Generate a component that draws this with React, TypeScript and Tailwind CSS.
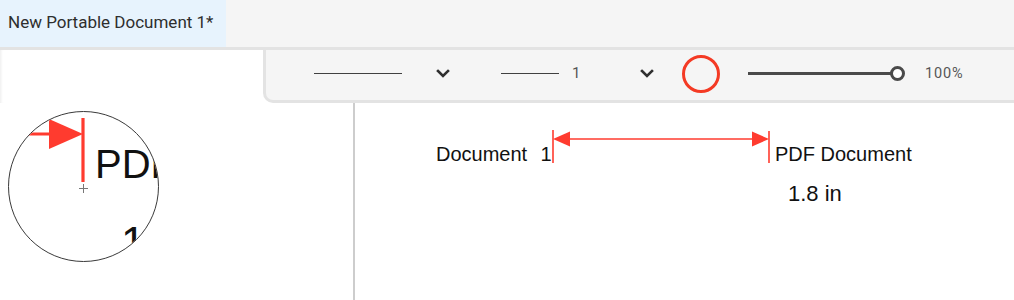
import { ReactNode } from "react";

const RED = "#ff3b2f";

// drawing on the page: distance measurement between two text blocks
function PageDrawing({ scale = 1 }: { scale?: number }) {
  return (
    <svg
      width={659 * scale}
      height={197 * scale}
      viewBox="0 0 659 197"
      className="block"
      style={{ fontFamily: '"Liberation Sans", Arial, sans-serif' }}
    >
      <text x="81" y="58" fontSize="20" fill="#111">
        Document
      </text>
      <text x="185.5" y="58" fontSize="20" fill="#111">
        1
      </text>
      <text x="420" y="58" fontSize="20" fill="#111">
        PDF Document
      </text>
      <text x="433" y="98" fontSize="22" fill="#111">
        1.8 in
      </text>

      {/* extension ticks */}
      <line x1="198" y1="27" x2="198" y2="60" stroke={RED} strokeWidth="1.6" />
      <line x1="414" y1="28" x2="414" y2="60" stroke={RED} strokeWidth="1.6" />
      {/* dimension line + heads */}
      <line x1="211" y1="36" x2="401" y2="36" stroke={RED} strokeWidth="1.6" />
      <polygon points="198,36 215,28.5 215,43.5" fill={RED} />
      <polygon points="414,36 397,28.5 397,43.5" fill={RED} />
    </svg>
  );
}

function Chevron() {
  return (
    <svg width="14" height="9" viewBox="0 0 14 9" fill="none">
      <path d="M2 2 L7 7 L12 2" stroke="#2f2f2f" strokeWidth="2.6" strokeLinecap="square" />
    </svg>
  );
}

function Dropdown({ children, width }: { children: ReactNode; width: string }) {
  return (
    <div className={`flex items-center justify-between ${width}`}>
      <div className="flex items-center">{children}</div>
      <Chevron />
    </div>
  );
}

export default function App() {
  return (
    <div
      className="relative w-[1014px] h-[300px] overflow-hidden bg-white text-[#333]"
      style={{ fontFamily: 'Roboto, "Noto Sans", sans-serif' }}
    >
      {/* Tab bar */}
      <div className="flex h-[47px] bg-[#f5f5f5]">
        <div className="flex items-center w-[226px] bg-[#e7f3fd] pl-[8px] pb-[2px] text-[17px] text-[#2e2e2e]">
          New Portable Document 1*
        </div>
      </div>
      <div className="h-[3px] bg-[#e3e3e3]" />

      {/* Tool options */}
      <div className="flex h-[53px]">
        <div className="w-[263px] bg-white shadow-[inset_3px_0_3px_-2px_rgba(0,0,0,0.08)]" />
        <div className="flex flex-1 items-center pl-[48px] pb-[3px] bg-[#f5f5f5] border-l-[3px] border-b-[3px] border-[#e3e3e3] rounded-bl-[10px]">
          <Dropdown width="w-[136px]">
            <div className="w-[88px] h-[1.5px] bg-[#404040]" />
          </Dropdown>
          <div className="ml-[51px]">
            <Dropdown width="w-[153px]">
              <div className="w-[58px] h-[1.5px] bg-[#404040]" />
              <span className="ml-[13px] text-[15px] text-[#555]">1</span>
            </Dropdown>
          </div>
          <div className="ml-[28px] w-[38px] h-[38px] rounded-full border-[3.5px] border-[#f43a24]" />
          <div className="ml-[28px] flex items-center w-[157px]">
            <div className="flex-1 h-[3px] bg-[#4a4a4a]" />
            <div className="w-[15px] h-[15px] -ml-[1px] rounded-full border-[3px] border-[#4a4a4a] bg-white" />
          </div>
          <span className="ml-[20px] text-[14.5px] tracking-[0.06em] text-[#555]">100%</span>
        </div>
      </div>

      {/* Work area */}
      <div className="flex h-[197px]">
        <div className="relative w-[356px] border-r-[2px] border-[#cdcdcd]">
          {/* loupe */}
          <div className="absolute left-[8px] top-[8px] w-[151px] h-[151px] rounded-full border border-[#3a3a3a] bg-white overflow-hidden">
            <div className="absolute left-[-754px] top-[-50px]">
              <PageDrawing scale={2} />
            </div>
            <div className="absolute left-[70px] top-[76px] w-[9px] h-px bg-[#777]" />
            <div className="absolute left-[74px] top-[72px] w-px h-[9px] bg-[#777]" />
          </div>
        </div>
        <div className="flex-1">
          <PageDrawing />
        </div>
      </div>
    </div>
  );
}
